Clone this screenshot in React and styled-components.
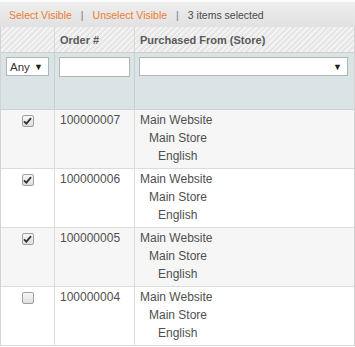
import React from "react";
import styled, { createGlobalStyle } from "styled-components";

const GlobalStyle = createGlobalStyle`
  body {
    margin: 0;
    background: #fff;
    font-family: "Liberation Sans", Arial, sans-serif;
  }
`;

const Wrapper = styled.div`
  width: 355px;
  box-sizing: border-box;
`;

const MassBar = styled.div`
  height: 27px;
  box-sizing: border-box;
  border-top: 2px solid #fbfbfb;
  background: linear-gradient(#eeeeee, #e1e1e1);
  display: flex;
  align-items: center;
  padding-left: 9px;
  font-size: 10.5px;
  color: #4a4a4a;
`;

const MassLink = styled.span`
  color: #ee7b33;
`;

const Sep = styled.span`
  color: #777;
  padding: 0 9px;
`;

const Grid = styled.div`
  border-left: 1px solid #d3d3d3;
  border-right: 1px solid #d3d3d3;
  box-sizing: border-box;
`;

const Row = styled.div`
  display: grid;
  grid-template-columns: 54px 80px 1fr;
  border-bottom: 1px solid ${({ $line }) => $line || "#dcdcdc"};
  background: ${({ $bg }) => $bg || "#fff"};
`;

const HeadRow = styled(Row)`
  height: 25px;
  background: repeating-linear-gradient(
    135deg,
    #f3f3f3 0 2px,
    #e6e6e6 2px 4px
  );
`;

const FilterRow = styled(Row)`
  height: 56px;
  background: #dae4e6;
`;

const Cell = styled.div`
  box-sizing: border-box;
  border-right: 1px solid ${({ $line }) => $line || "#dcdcdc"};
  &:last-child {
    border-right: none;
  }
`;

const HeadCell = styled(Cell)`
  font-size: 11px;
  font-weight: bold;
  color: #5a5a5a;
  padding-left: 5px;
  display: flex;
  align-items: center;
`;

const FilterCell = styled(Cell)`
  padding: 4px ${({ $right }) => $right || "4px"} 0 ${({ $left }) => $left || "4px"};
`;

const SelectBox = styled.div`
  height: 19px;
  box-sizing: border-box;
  border: 1px solid #b4b4b4;
  background: #fff;
  display: flex;
  align-items: center;
  justify-content: space-between;
  padding: 0 5px 0 3px;
  font-size: 11.5px;
  color: #333;
`;

const Arrow = styled.span`
  font-size: 9px;
  color: #222;
`;

const TextInput = styled.div`
  height: 20px;
  box-sizing: border-box;
  border: 1px solid #b4b4b4;
  background: #fff;
`;

const DataCell = styled(Cell)`
  padding: 1px 0 3px 5px;
  font-size: 12px;
  line-height: 18px;
  color: #4f4f4f;
`;

const CheckCell = styled(Cell)`
  display: flex;
  justify-content: center;
  padding-top: 5px;
`;

const Check = styled.span`
  width: 12px;
  height: 12px;
  box-sizing: border-box;
  border: 1px solid #a0a0a0;
  border-radius: 2px;
  background: linear-gradient(#f7f7f7, #dedede);
  display: flex;
  align-items: center;
  justify-content: center;
`;

const StoreLine = styled.div`
  padding-left: ${({ $indent }) => $indent || 0}px;
`;

const CheckMark = () => (
  <svg width="9" height="8" viewBox="0 0 9 8">
    <path d="M1 4.3 L3.4 6.6 L8 1.2" fill="none" stroke="#333" strokeWidth="1.8" />
  </svg>
);

const orders = [
  { id: "100000007", checked: true },
  { id: "100000006", checked: true },
  { id: "100000005", checked: true },
  { id: "100000004", checked: false },
];

export default function App() {
  return (
    <Wrapper>
      <GlobalStyle />
      <MassBar>
        <MassLink>Select Visible</MassLink>
        <Sep>|</Sep>
        <MassLink>Unselect Visible</MassLink>
        <Sep>|</Sep>
        <span>3 items selected</span>
      </MassBar>
      <Grid>
        <HeadRow $line="#cfcfcf">
          <HeadCell $line="#d8d8d8" />
          <HeadCell $line="#d8d8d8">Order #</HeadCell>
          <HeadCell>Purchased From (Store)</HeadCell>
        </HeadRow>
        <FilterRow $line="#c9d3d5">
          <FilterCell $left="5px" $right="5px" $line="#c5d0d2">
            <SelectBox>
              Any <Arrow>▼</Arrow>
            </SelectBox>
          </FilterCell>
          <FilterCell $line="#c5d0d2">
            <TextInput />
          </FilterCell>
          <FilterCell $right="6px">
            <SelectBox>
              <span />
              <Arrow>▼</Arrow>
            </SelectBox>
          </FilterCell>
        </FilterRow>
        {orders.map((o, i) => (
          <Row key={o.id} $bg={i % 2 === 0 ? "#f6f6f6" : "#fff"}>
            <CheckCell>
              <Check>{o.checked && <CheckMark />}</Check>
            </CheckCell>
            <DataCell>{o.id}</DataCell>
            <DataCell>
              <StoreLine>Main Website</StoreLine>
              <StoreLine $indent={9}>Main Store</StoreLine>
              <StoreLine $indent={18}>English</StoreLine>
            </DataCell>
          </Row>
        ))}
      </Grid>
    </Wrapper>
  );
}
